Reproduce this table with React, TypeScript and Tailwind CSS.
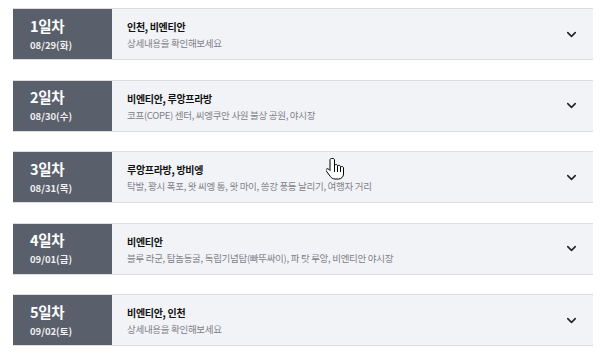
import { ChevronDown } from 'lucide-react';

const days = [
  { day: '1일차', date: '08/29(화)', title: '인천, 비엔티안', desc: '상세내용을 확인해보세요' },
  {
    day: '2일차',
    date: '08/30(수)',
    title: '비엔티안, 루앙프라방',
    desc: '코프(COPE) 센터, 씨엥쿠안 사원 불상 공원, 야시장',
  },
  {
    day: '3일차',
    date: '08/31(목)',
    title: '루앙프라방, 방비엥',
    desc: '탁발, 꽝시 폭포, 왓 씨엥 통, 왓 마이, 쏭강 풍등 날리기, 여행자 거리',
  },
  {
    day: '4일차',
    date: '09/01(금)',
    title: '비엔티안',
    desc: '블루 라군, 탐놈동굴, 독립기념탑(빠뚜싸이), 파 탓 루앙, 비엔티안 야시장',
  },
  { day: '5일차', date: '09/02(토)', title: '비엔티안, 인천', desc: '상세내용을 확인해보세요' },
];

const HandCursor = () => (
  <svg width="20" height="24" viewBox="0 0 20 24" className="absolute left-[326px] top-[157px]">
    <path
      d="M5.5 1.5c-.9 0-1.5.7-1.5 1.5v10.5l-1.3-1.3c-.7-.7-1.8-.7-2.4 0-.5.6-.4 1.4.1 2l4 5.3c1 1.4 2.6 2.5 4.6 2.5h3.5c2.9 0 5-2.3 5-5V11c0-.8-.6-1.5-1.5-1.5S14.5 10.2 14.5 11V9.8c0-.8-.6-1.5-1.5-1.5S11.5 9 11.5 9.8V9c0-.8-.6-1.5-1.5-1.5S8.5 8.2 8.5 9V3c0-.8-.6-1.5-1.5-1.5z"
      fill="#fff"
      stroke="#000"
      strokeWidth="1"
      strokeLinejoin="round"
    />
    <path d="M8.5 9v6M11.5 9.8V15M14.5 11v4" stroke="#000" strokeWidth="1" />
  </svg>
);

const App = () => {
  return (
    <div
      className="relative w-[603px] h-[355px] bg-white pt-[8px] px-[13px] flex flex-col gap-[19.5px]"
      style={{ fontFamily: '"Noto Sans CJK KR", "Noto Sans", sans-serif' }}
    >
      {days.map((d) => (
        <div
          key={d.day}
          className="flex h-[52px] w-[580px] border-y border-[#dcdde0] bg-[#f2f3f7]"
        >
          <div className="w-[99px] bg-[#5a5f6c] text-white pl-[17px] flex flex-col justify-center">
            <span className="text-[14.5px] font-bold leading-[18px] tracking-[-0.3px]">{d.day}</span>
            <span className="text-[9.5px] font-bold leading-[14px] mt-[3px] text-[#f0f0f0]">
              {d.date}
            </span>
          </div>
          <div className="flex-1 flex items-center pl-[15px] pr-[14px]">
            <div className="flex-1 flex flex-col pt-[2px]">
              <span className="text-[10px] font-bold leading-[14px] text-[#111] tracking-[-0.3px]">
                {d.title}
              </span>
              <span className="text-[9.5px] leading-[14px] mt-[2px] text-[#808188] tracking-[-0.3px]">
                {d.desc}
              </span>
            </div>
            <ChevronDown size={15} strokeWidth={2.5} className="text-[#222]" />
          </div>
        </div>
      ))}
      <HandCursor />
    </div>
  );
};

export default App;
